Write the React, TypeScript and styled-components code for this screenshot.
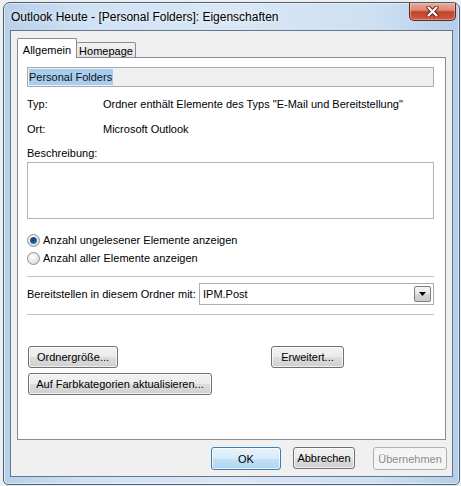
import React from 'react';
import styled, { createGlobalStyle } from 'styled-components';

const GlobalStyle = createGlobalStyle`
  html, body {
    margin: 0;
    padding: 0;
    background: #eceff2;
  }
  body {
    font-family: "Liberation Sans", Arial, sans-serif;
    font-size: 11px;
    color: #000;
  }
`;

const Window = styled.div`
  margin: 2px 0 0 3px;
  width: 457px;
  height: 483px;
  box-sizing: border-box;
  border: 1px solid #4f5d6d;
  border-radius: 7px 7px 5px 5px;
  background: linear-gradient(90deg, #b6cfeb 0%, #cfe1f3 18%, #d9e7f5 50%, #cddff2 82%, #b4cdea 100%);
  box-shadow: inset 0 0 0 1px rgba(255, 255, 255, 0.55);
  display: flex;
  flex-direction: column;
  padding-bottom: 7px;
`;

const TitleBar = styled.div`
  height: 27px;
  display: flex;
  align-items: flex-start;
  justify-content: space-between;
  padding-left: 7px;
  padding-right: 3px;
`;

const TitleText = styled.div`
  margin-top: 7px;
  font-size: 12px;
  line-height: 15px;
  color: #000;
  text-shadow: 0 0 6px rgba(255, 255, 255, 0.9);
`;

const CloseButton = styled.div`
  width: 47px;
  height: 18px;
  box-sizing: border-box;
  border: 1px solid #5e2a20;
  border-top: none;
  border-radius: 0 0 5px 5px;
  background: linear-gradient(#e9ab9b 0%, #dc8a76 42%, #c5432b 52%, #cf5a40 100%);
  box-shadow: inset 0 0 0 1px rgba(255, 210, 200, 0.45);
  display: flex;
  align-items: center;
  justify-content: center;
`;

const Client = styled.div`
  flex: 1;
  margin: 0 6px;
  background: #f0f0f0;
  border: 1px solid #66768a;
  display: flex;
  flex-direction: column;
  padding: 7px 6px 0 6px;
`;

const TabStrip = styled.div`
  height: 20px;
  margin-bottom: -1px;
  display: flex;
  align-items: flex-end;
  position: relative;
  z-index: 1;
`;

const Tab = styled.div<{ $active?: boolean; $width: number }>`
  width: ${(p) => p.$width}px;
  box-sizing: border-box;
  height: ${(p) => (p.$active ? 20 : 16)}px;
  border: 1px solid #898c95;
  border-bottom: ${(p) => (p.$active ? 'none' : '1px solid #898c95')};
  border-left: ${(p) => (p.$active ? '1px solid #898c95' : 'none')};
  border-radius: 2px 2px 0 0;
  background: ${(p) => (p.$active ? '#ffffff' : 'linear-gradient(#f2f2f2, #e3e3e3)')};
  display: flex;
  align-items: center;
  justify-content: center;
  padding-top: ${(p) => (p.$active ? 2 : 1)}px;
  font-size: 11px;
`;

const Panel = styled.div`
  height: 383px;
  box-sizing: border-box;
  background: #fff;
  border: 1px solid #898c95;
  padding: 9px 11px 0 9px;
  display: flex;
  flex-direction: column;
`;

const NameBox = styled.div`
  height: 20px;
  box-sizing: border-box;
  border: 1px solid #ababab;
  background: #f0f0f0;
  padding: 1px;
  display: flex;
  align-items: center;
`;

const Selected = styled.span`
  background: #a7cdf0;
  color: #111;
  line-height: 16px;
  padding: 0 1px 0 0;
`;

const InfoRow = styled.div<{ $top: number }>`
  display: flex;
  line-height: 14px;
  margin-top: ${(p) => p.$top}px;
`;

const InfoLabel = styled.div`
  width: 76px;
  flex: none;
`;

const Label = styled.div<{ $top: number }>`
  line-height: 14px;
  margin-top: ${(p) => p.$top}px;
`;

const TextArea = styled.div`
  margin-top: 2px;
  height: 57px;
  box-sizing: border-box;
  border: 1px solid #b4b4b4;
  background: #fff;
`;

const RadioRow = styled.div<{ $top: number }>`
  display: flex;
  align-items: center;
  height: 16px;
  margin-top: ${(p) => p.$top}px;
  gap: 3px;
`;

const RadioCircle = styled.span<{ $checked?: boolean }>`
  width: 13px;
  height: 13px;
  box-sizing: border-box;
  border-radius: 50%;
  border: 1px solid #8f8f8f;
  background: radial-gradient(circle at 40% 35%, #ffffff 0%, #e6e6e6 55%, #cbcbcb 100%);
  display: flex;
  align-items: center;
  justify-content: center;

  &::after {
    content: '';
    display: ${(p) => (p.$checked ? 'block' : 'none')};
    width: 7px;
    height: 7px;
    border-radius: 50%;
    background: radial-gradient(circle at 45% 40%, #0f3a66 0%, #1d5a93 45%, #62a6dc 100%);
  }
`;

const Separator = styled.div<{ $top: number }>`
  margin-top: ${(p) => p.$top}px;
  height: 0;
  border-top: 1px solid #c2c2c2;
`;

const ComboRow = styled.div`
  margin-top: 6px;
  display: flex;
  align-items: center;
`;

const ComboLabel = styled.div`
  width: 172px;
  flex: none;
`;

const Combo = styled.div`
  flex: 1;
  height: 22px;
  box-sizing: border-box;
  border: 1px solid #abadb3;
  display: flex;
  align-items: center;
  justify-content: space-between;
  padding: 0 2px 0 3px;
`;

const DropButton = styled.div`
  width: 17px;
  height: 16px;
  box-sizing: border-box;
  border: 1px solid #7d7d7d;
  border-radius: 2px;
  background: linear-gradient(#f4f4f4 0%, #e6e6e6 50%, #d6d6d6 51%, #c9c9c9 100%);
  display: flex;
  align-items: center;
  justify-content: center;
`;

const ButtonGrid = styled.div`
  margin-top: 31px;
  padding-left: 1px;
  display: grid;
  grid-template-columns: 243px auto;
  row-gap: 5px;
  justify-items: start;
`;

const Button = styled.div<{ $width: number; $variant?: 'default' | 'disabled'; $gap?: number }>`
  width: ${(p) => p.$width}px;
  height: ${(p) => (p.$variant ? 23 : 22)}px;
  margin-left: ${(p) => p.$gap ?? 0}px;
  box-sizing: border-box;
  border-radius: 3px;
  border: 1px solid
    ${(p) => (p.$variant === 'default' ? '#3c7fb1' : p.$variant === 'disabled' ? '#adb2b5' : '#707070')};
  background: ${(p) =>
    p.$variant === 'default'
      ? 'linear-gradient(#e6f3fb 0%, #d7ebf8 50%, #c2e0f5 51%, #b0d5f1 100%)'
      : p.$variant === 'disabled'
      ? '#f4f4f4'
      : 'linear-gradient(#f2f2f2 0%, #ebebeb 50%, #dddddd 51%, #cfcfcf 100%)'};
  box-shadow: inset 0 0 0 1px
    ${(p) => (p.$variant === 'disabled' ? 'transparent' : 'rgba(255, 255, 255, 0.7)')};
  color: ${(p) => (p.$variant === 'disabled' ? '#8d8d8d' : '#000')};
  display: flex;
  align-items: center;
  justify-content: center;
  white-space: nowrap;
`;

const Footer = styled.div`
  display: flex;
  justify-content: flex-end;
  padding: 7px 0 0 0;
  margin-right: -1px;
`;

const App: React.FC = () => {
  return (
    <>
      <GlobalStyle />
      <Window>
        <TitleBar>
          <TitleText>Outlook Heute - [Personal Folders]: Eigenschaften</TitleText>
          <CloseButton>
            <svg width="13" height="11" viewBox="0 0 13 11">
              <path d="M2.5 1.5 L10.5 9.5 M10.5 1.5 L2.5 9.5" stroke="#5a2318" strokeWidth="4" strokeLinecap="round" />
              <path d="M2.5 1.5 L10.5 9.5 M10.5 1.5 L2.5 9.5" stroke="#ffffff" strokeWidth="2.2" strokeLinecap="round" />
            </svg>
          </CloseButton>
        </TitleBar>
        <Client>
          <TabStrip>
            <Tab $active $width={60}>Allgemein</Tab>
            <Tab $width={59}>Homepage</Tab>
          </TabStrip>
          <Panel>
            <NameBox>
              <Selected>Personal Folders</Selected>
            </NameBox>
            <InfoRow $top={10}>
              <InfoLabel>Typ:</InfoLabel>
              <div>Ordner enthält Elemente des Typs "E-Mail und Bereitstellung"</div>
            </InfoRow>
            <InfoRow $top={11}>
              <InfoLabel>Ort:</InfoLabel>
              <div>Microsoft Outlook</div>
            </InfoRow>
            <Label $top={10}>Beschreibung:</Label>
            <TextArea />
            <RadioRow $top={13}>
              <RadioCircle $checked />
              Anzahl ungelesener Elemente anzeigen
            </RadioRow>
            <RadioRow $top={2}>
              <RadioCircle />
              Anzahl aller Elemente anzeigen
            </RadioRow>
            <Separator $top={10} />
            <ComboRow>
              <ComboLabel>Bereitstellen in diesem Ordner mit:</ComboLabel>
              <Combo>
                <span>IPM.Post</span>
                <DropButton>
                  <svg width="7" height="4" viewBox="0 0 7 4">
                    <path d="M0 0 H7 L3.5 4 Z" fill="#000" />
                  </svg>
                </DropButton>
              </Combo>
            </ComboRow>
            <Separator $top={9} />
            <ButtonGrid>
              <Button $width={90}>Ordnergröße...</Button>
              <Button $width={73}>Erweitert...</Button>
              <Button $width={184}>Auf Farbkategorien aktualisieren...</Button>
            </ButtonGrid>
          </Panel>
          <Footer>
            <Button $width={70} $variant="default">OK</Button>
            <Button $width={62} $gap={12}>Abbrechen</Button>
            <Button $width={74} $gap={18} $variant="disabled">Übernehmen</Button>
          </Footer>
        </Client>
      </Window>
    </>
  );
};

export default App;
